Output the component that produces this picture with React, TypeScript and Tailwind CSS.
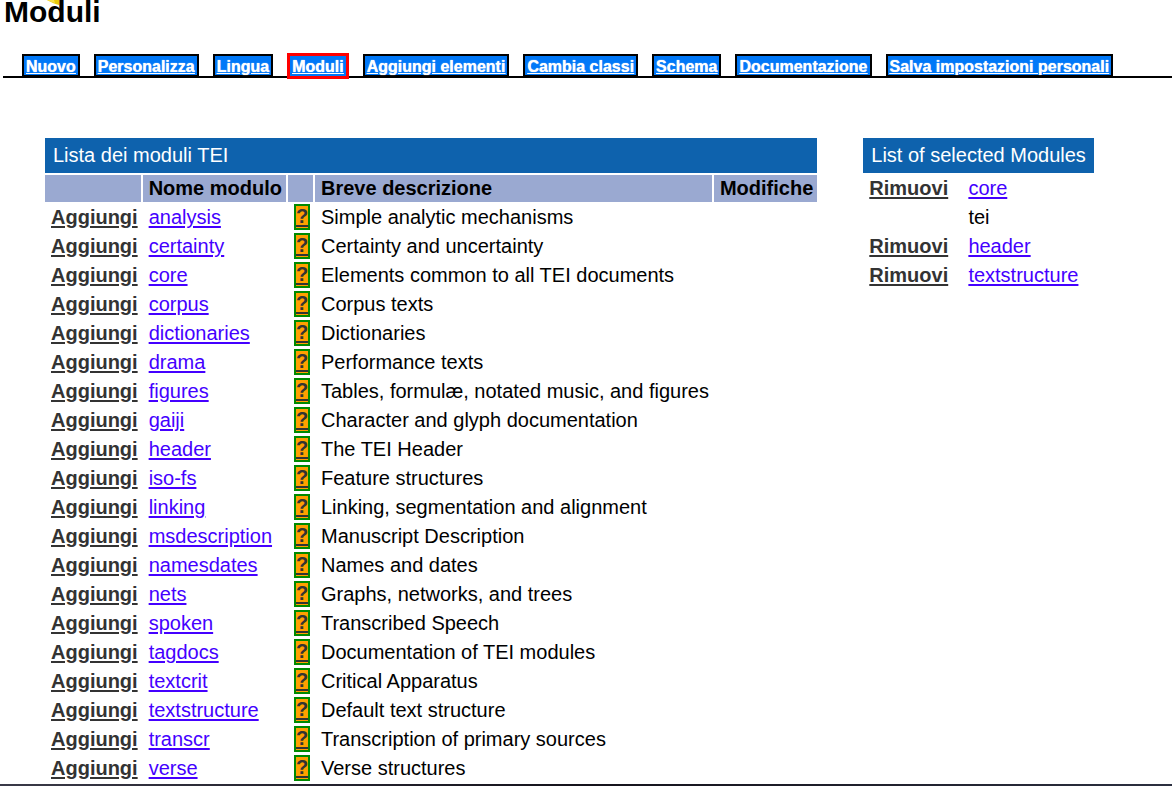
const tabs = [
  "Nuovo",
  "Personalizza",
  "Lingua",
  "Moduli",
  "Aggiungi elementi",
  "Cambia classi",
  "Schema",
  "Documentazione",
  "Salva impostazioni personali",
];

const modules = [
  ["analysis", "Simple analytic mechanisms"],
  ["certainty", "Certainty and uncertainty"],
  ["core", "Elements common to all TEI documents"],
  ["corpus", "Corpus texts"],
  ["dictionaries", "Dictionaries"],
  ["drama", "Performance texts"],
  ["figures", "Tables, formulæ, notated music, and figures"],
  ["gaiji", "Character and glyph documentation"],
  ["header", "The TEI Header"],
  ["iso-fs", "Feature structures"],
  ["linking", "Linking, segmentation and alignment"],
  ["msdescription", "Manuscript Description"],
  ["namesdates", "Names and dates"],
  ["nets", "Graphs, networks, and trees"],
  ["spoken", "Transcribed Speech"],
  ["tagdocs", "Documentation of TEI modules"],
  ["textcrit", "Critical Apparatus"],
  ["textstructure", "Default text structure"],
  ["transcr", "Transcription of primary sources"],
  ["verse", "Verse structures"],
];

const selected = [
  { name: "core", removable: true },
  { name: "tei", removable: false },
  { name: "header", removable: true },
  { name: "textstructure", removable: true },
];

const cell = "h-[27px] p-0 pl-1.5 pr-[3px] text-left align-top whitespace-nowrap";
const heading = "h-[27px] bg-[#9aa9d1] p-0 pl-1.5 pr-1 text-left align-top whitespace-nowrap";
const action = "font-bold text-[#333333] underline decoration-2 underline-offset-2";
const moduleLink = "text-[#4400ff] underline decoration-2 underline-offset-2";
const caption = "h-[35px] bg-[#0e62ad] p-0 px-2 text-left font-normal text-white whitespace-nowrap";

function Tab({ label, active }: { label: string; active: boolean }) {
  return (
    <a
      href="#"
      aria-current={active ? "page" : undefined}
      className={
        active
          ? "relative -mt-px -mb-[3px] h-[26px] border-3 border-[#ff0000] bg-[#0078f8] px-0.5 leading-[22px] text-white underline whitespace-nowrap [text-shadow:0_0_1px_#fff]"
          : "relative -mb-px h-[23px] border-2 border-black bg-[#0078f8] px-0.5 leading-[22px] text-white underline whitespace-nowrap [text-shadow:0_0_1px_#fff]"
      }
    >
      {label}
    </a>
  );
}

function ModuleTable() {
  return (
    <table className="border-separate border-spacing-0.5">
      <thead>
        <tr>
          <th colSpan={5} className={caption}>Lista dei moduli TEI</th>
        </tr>
        <tr>
          <th className={heading}></th>
          <th className={heading}>Nome modulo</th>
          <th className="bg-[#9aa9d1] p-0"></th>
          <th className={heading}>Breve descrizione</th>
          <th className={heading}>Modifiche</th>
        </tr>
      </thead>
      <tbody>
        {modules.map(([name, description]) => (
          <tr key={name}>
            <td className={cell}>
              <a href="#" className={action}>Aggiungi</a>
            </td>
            <td className={cell}>
              <a href="#" className={moduleLink}>{name}</a>
            </td>
            <td className={cell}>
              <a
                href="#"
                className="block h-[26px] w-4 border-2 border-[#008a00] bg-[#ffa000] text-center leading-[21px] font-bold text-[#333333] underline decoration-2 underline-offset-2"
              >
                ?
              </a>
            </td>
            <td className={cell}>{description}</td>
            <td className={cell}></td>
          </tr>
        ))}
      </tbody>
    </table>
  );
}

function SelectedTable() {
  return (
    <table className="border-separate border-spacing-0.5">
      <thead>
        <tr>
          <th colSpan={2} className={caption}>List of selected Modules</th>
        </tr>
      </thead>
      <tbody>
        {selected.map(({ name, removable }) => (
          <tr key={name}>
            <td className={cell}>{removable && <a href="#" className={action}>Rimuovi</a>}</td>
            <td className={cell}>
              {removable ? <a href="#" className={moduleLink}>{name}</a> : name}
            </td>
          </tr>
        ))}
      </tbody>
    </table>
  );
}

export default function App() {
  return (
    <div className="bg-white font-['Liberation_Sans',Arial,sans-serif] text-xl leading-[27px] text-black">
      <header className="relative h-[54px] pl-1">
        <h1 className="text-[30px] leading-6 font-bold">Moduli</h1>
        <svg className="absolute top-0 left-[47px]" width="12" height="6" viewBox="0 0 12 6" aria-hidden="true">
          <path d="M0 0H12V5Q7 4 0 0Z" fill="#eac90a" />
          <path d="M0 0H7L8 3Q4 2 0 0Z" fill="#f8e04a" />
        </svg>
      </header>
      <nav className="ml-[3px] flex gap-3.5 border-b-2 border-black pl-[19px] text-base font-bold">
        {tabs.map((label) => (
          <Tab key={label} label={label} active={label === "Moduli"} />
        ))}
      </nav>
      <main className="flex items-start gap-[42px] pt-[58px] pl-[43px]">
        <ModuleTable />
        <SelectedTable />
      </main>
      <footer className="h-0.5 bg-linear-to-r from-[#3a3a48] via-[#15131c] to-[#2c3040]" />
    </div>
  );
}
